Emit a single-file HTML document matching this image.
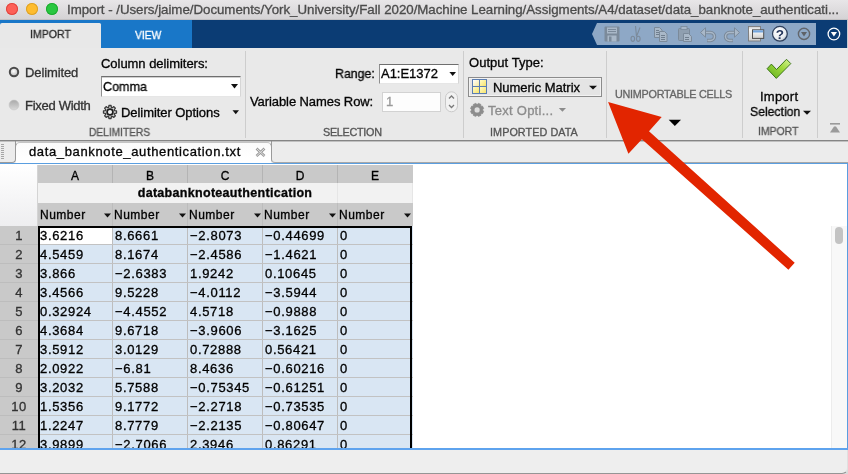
<!DOCTYPE html>
<html><head><meta charset="utf-8">
<style>
*{box-sizing:border-box;margin:0;padding:0}
html,body{width:848px;height:474px;overflow:hidden;background:#ececec;font-family:"Liberation Sans",sans-serif;position:relative}
.a{position:absolute}
.t{position:absolute;line-height:1;white-space:nowrap;font-family:"Liberation Sans",sans-serif;-webkit-text-stroke:0.32px currentColor;will-change:transform}
.tl{position:absolute;top:3px;width:12px;height:12px;border-radius:50%}
.sep{position:absolute;top:51px;width:1px;height:87px;background:#cdcdcd}
.gl{position:absolute;background:#bcbcbc}
</style></head><body>
<!-- title bar -->
<div class="a" style="left:0;top:0;width:848px;height:20px;background:linear-gradient(#e8e6e8,#d4d2d4)"></div>
<div class="a" style="left:0;top:19px;width:848px;height:1px;background:#c2c0c2"></div>
<div class="tl" style="left:6px;background:#fd5f57;box-shadow:inset 0 0 0 1px #e0443e"></div>
<div class="tl" style="left:26px;background:#febc2e;box-shadow:inset 0 0 0 1px #dca128"></div>
<div class="tl" style="left:46px;background:#29c740;box-shadow:inset 0 0 0 1px #1eaa30"></div>
<!-- tab bar -->
<div class="a" style="left:0;top:20px;width:848px;height:28px;background:#0b3c74"></div>
<div class="a" style="left:0;top:20px;width:192px;height:28px;background:#1977c8"></div>
<div class="a" style="left:0;top:23px;width:101px;height:26px;background:#e8e8e8;border-radius:2px 1.5px 0 0"></div>
<!-- QAT -->
<svg class="a" style="left:0;top:0" width="848" height="48">
  <polygon points="592,34 597,23 816,23 816,45 597,45" fill="#8ea8c6"/>
</svg>
<div class="a" style="left:847px;top:20px;width:1px;height:28px;background:#c9ccd2"></div>
<!-- ribbon -->
<div class="a" style="left:0;top:48px;width:848px;height:92px;background:#e9e9e9"></div>
<div class="sep" style="left:245px"></div>
<div class="sep" style="left:463px"></div>
<div class="sep" style="left:606px"></div>
<div class="sep" style="left:742px"></div>
<div class="sep" style="left:817px"></div>
<div class="a" style="left:0;top:140px;width:848px;height:1px;background:#8c8c8c"></div>
<!-- doc tab strip -->
<div class="a" style="left:0;top:141px;width:848px;height:22px;background:#f4f4f4"></div>
<div class="a" style="left:-1px;top:140px;width:17px;height:23px;background:#ececec;border-right:1px solid #9a9a9a;border-bottom:1px solid #9a9a9a;border-radius:0 0 4px 0"></div>
<div class="a" style="left:271px;top:140px;width:600px;height:23px;background:#ececec;border-left:1px solid #9a9a9a;border-bottom:1px solid #a8a8a8;border-radius:0 0 0 4px"></div>
<div class="a" style="left:15px;top:142px;width:257px;height:17px;background:linear-gradient(#fbfbfb,#ffffff);border:1px solid #9a9a9a;border-top-color:#c4c4c4;border-bottom:none;border-radius:5px 5px 0 0"></div>
<div class="a" style="left:16px;top:158px;width:255px;height:5px;background:#ffffff"></div>
<div class="a" style="left:0;top:140px;width:848px;height:1px;background:#858585"></div>
<div class="a" style="left:0;top:141px;width:848px;height:1px;background:rgba(140,140,140,0.45)"></div>
<!-- table panel -->
<div class="a" style="left:0;top:163px;width:848px;height:287px;background:#fff;border-top:1px solid #5a9ee0;border-right:1px solid #5a9ee0;border-bottom:2px solid #5ea3ee"></div>
<!-- table -->
<div class="a" style="left:0;top:164px;width:38px;height:62px;background:linear-gradient(#ffffff,#eeeef0)"></div>
<div class="a" style="left:37px;top:165px;width:1px;height:61px;background:#d4d4d4"></div>
<div class="a" style="left:38px;top:165px;width:375px;height:18px;background:#c9c9c9"></div>
<div class="a" style="left:38px;top:183px;width:375px;height:20px;background:#f2f2f2"></div>
<div class="a" style="left:337px;top:183px;width:1px;height:20px;background:#e6e6e6"></div>
<div class="a" style="left:412px;top:183px;width:1px;height:20px;background:#e6e6e6"></div>
<div class="a" style="left:38px;top:203px;width:375px;height:23px;background:#c9c9c9"></div>
<div class="a" style="left:0;top:226px;width:38px;height:222px;background:#c9c9c9"></div>
<div class="a" style="left:38px;top:226px;width:375px;height:222px;background:#d9e6f3"></div>
<div class="a" style="left:40px;top:228px;width:72px;height:17px;background:#ffffff"></div>
<div class="gl" style="left:112px;top:165px;width:1px;height:18px;background:#b4b4b4"></div>
<div class="gl" style="left:112px;top:203px;width:1px;height:245px;background:#bdbdbd"></div>
<div class="gl" style="left:187px;top:165px;width:1px;height:18px;background:#b4b4b4"></div>
<div class="gl" style="left:187px;top:203px;width:1px;height:245px;background:#bdbdbd"></div>
<div class="gl" style="left:262px;top:165px;width:1px;height:18px;background:#b4b4b4"></div>
<div class="gl" style="left:262px;top:203px;width:1px;height:245px;background:#bdbdbd"></div>
<div class="gl" style="left:337px;top:165px;width:1px;height:18px;background:#b4b4b4"></div>
<div class="gl" style="left:337px;top:203px;width:1px;height:245px;background:#bdbdbd"></div>
<div class="gl" style="left:38px;top:244px;width:375px;height:1px;background:#c2c2c2"></div>
<div class="gl" style="left:0;top:244px;width:38px;height:1px;background:#bdbdbd"></div>
<div class="gl" style="left:38px;top:263px;width:375px;height:1px;background:#c2c2c2"></div>
<div class="gl" style="left:0;top:263px;width:38px;height:1px;background:#bdbdbd"></div>
<div class="gl" style="left:38px;top:282px;width:375px;height:1px;background:#c2c2c2"></div>
<div class="gl" style="left:0;top:282px;width:38px;height:1px;background:#bdbdbd"></div>
<div class="gl" style="left:38px;top:301px;width:375px;height:1px;background:#c2c2c2"></div>
<div class="gl" style="left:0;top:301px;width:38px;height:1px;background:#bdbdbd"></div>
<div class="gl" style="left:38px;top:320px;width:375px;height:1px;background:#c2c2c2"></div>
<div class="gl" style="left:0;top:320px;width:38px;height:1px;background:#bdbdbd"></div>
<div class="gl" style="left:38px;top:339px;width:375px;height:1px;background:#c2c2c2"></div>
<div class="gl" style="left:0;top:339px;width:38px;height:1px;background:#bdbdbd"></div>
<div class="gl" style="left:38px;top:358px;width:375px;height:1px;background:#c2c2c2"></div>
<div class="gl" style="left:0;top:358px;width:38px;height:1px;background:#bdbdbd"></div>
<div class="gl" style="left:38px;top:377px;width:375px;height:1px;background:#c2c2c2"></div>
<div class="gl" style="left:0;top:377px;width:38px;height:1px;background:#bdbdbd"></div>
<div class="gl" style="left:38px;top:396px;width:375px;height:1px;background:#c2c2c2"></div>
<div class="gl" style="left:0;top:396px;width:38px;height:1px;background:#bdbdbd"></div>
<div class="gl" style="left:38px;top:415px;width:375px;height:1px;background:#c2c2c2"></div>
<div class="gl" style="left:0;top:415px;width:38px;height:1px;background:#bdbdbd"></div>
<div class="gl" style="left:38px;top:434px;width:375px;height:1px;background:#c2c2c2"></div>
<div class="gl" style="left:0;top:434px;width:38px;height:1px;background:#bdbdbd"></div>
<div class="a" style="left:38px;top:226px;width:374px;height:2px;background:#000"></div>
<div class="a" style="left:38px;top:226px;width:2px;height:222px;background:#000"></div>
<div class="a" style="left:410px;top:226px;width:2px;height:222px;background:#000"></div>
<div class="a" style="left:831px;top:226px;width:16px;height:222px;background:#f8f8f8;border-left:1px solid #ececec"></div>
<div class="a" style="left:835px;top:227px;width:8px;height:17px;background:#c3c3c3;border-radius:4px"></div>
<!-- status bar -->
<div class="a" style="left:0;top:450px;width:848px;height:24px;background:#d9d9d9"></div>
<div class="a" style="left:0;top:450px;width:848px;height:24px;background:#eeeeee;border-bottom:1px solid #959595;border-right:1px solid #e0e0e0;border-radius:0 0 6px 0"></div>
<div class="a" style="left:101px;top:76px;width:140px;height:21px;background:#fff;box-shadow:inset 0 1px 0 #d0d0d0;border-top:1px solid #6f6f6f;border-left:1px solid #8f8f8f;border-right:1px solid #d6d6d6;border-bottom:1px solid #e6e6e6"></div>
<div class="a" style="left:379px;top:64px;width:80px;height:20px;background:#fff;border-top:1px solid #6f6f6f;border-left:1px solid #8f8f8f;border-right:1px solid #d6d6d6;border-bottom:1px solid #e6e6e6"></div>
<div class="a" style="left:382px;top:92px;width:59px;height:20px;background:#fdfdfd;border:1px solid #d2d2d2"></div>
<div class="a" style="left:468px;top:77px;width:134px;height:20px;background:#e4e4e4;border:1px solid #8c8c8c;box-shadow:inset 0 0 0 1px #f2f2f2"></div>
<div class="t" style="left:67.00px;top:2.74px;font-size:13.3px;color:#4b4b4b;letter-spacing:-0.029px;">Import - /Users/jaime/Documents/York_University/Fall 2020/Machine Learning/Assigments/A4/dataset/data_banknote_authenticati...</div>
<div class="t" style="left:30.00px;top:29.29px;font-size:11px;color:#2b2b2b;transform-origin:0 0;transform:scaleX(0.9620);">IMPORT</div>
<div class="t" style="left:135.00px;top:30.17px;font-size:11.5px;color:#ffffff;transform-origin:0 0;transform:scaleX(0.8982);">VIEW</div>
<div class="t" style="left:24.70px;top:66.00px;font-size:13px;color:#333;letter-spacing:-0.111px;">Delimited</div>
<div class="t" style="left:24.70px;top:99.00px;font-size:13px;color:#333;letter-spacing:-0.284px;">Fixed Width</div>
<div class="t" style="left:101.40px;top:57.30px;font-size:13px;color:#050505;letter-spacing:-0.039px;">Column delimiters:</div>
<div class="t" style="left:103.20px;top:79.60px;font-size:13px;color:#050505;transform-origin:0 0;transform:scaleX(0.9660);">Comma</div>
<div class="t" style="left:120.60px;top:105.70px;font-size:13px;color:#050505;letter-spacing:-0.063px;">Delimiter Options</div>
<div class="t" style="left:89.40px;top:126.56px;font-size:10.8px;color:#555;transform-origin:0 0;transform:scaleX(0.9436);">DELIMITERS</div>
<div class="t" style="left:334.50px;top:66.80px;font-size:13px;color:#050505;transform-origin:0 0;transform:scaleX(0.9506);">Range:</div>
<div class="t" style="left:381.00px;top:66.80px;font-size:13px;color:#050505;letter-spacing:-0.016px;">A1:E1372</div>
<div class="t" style="left:250.20px;top:95.00px;font-size:13px;color:#050505;letter-spacing:-0.087px;">Variable Names Row:</div>
<div class="t" style="left:385.50px;top:95.00px;font-size:13px;color:#9a9a9a;">1</div>
<div class="t" style="left:322.60px;top:126.56px;font-size:10.8px;color:#555;letter-spacing:-0.275px;">SELECTION</div>
<div class="t" style="left:468.60px;top:56.00px;font-size:13px;color:#050505;letter-spacing:0.036px;">Output Type:</div>
<div class="t" style="left:492.70px;top:80.70px;font-size:13px;color:#050505;letter-spacing:-0.031px;">Numeric Matrix</div>
<div class="t" style="left:487.50px;top:104.00px;font-size:13px;color:#8c8c8c;letter-spacing:0.260px;">Text Opti...</div>
<div class="t" style="left:489.50px;top:126.66px;font-size:10.8px;color:#555;letter-spacing:0.068px;">IMPORTED DATA</div>
<div class="t" style="left:615.40px;top:88.86px;font-size:10.8px;color:#666;letter-spacing:-0.247px;">UNIMPORTABLE CELLS</div>
<div class="t" style="left:760.00px;top:90.00px;font-size:13px;color:#050505;letter-spacing:0.231px;">Import</div>
<div class="t" style="left:750.40px;top:104.70px;font-size:13px;color:#050505;transform-origin:0 0;transform:scaleX(0.9393);">Selection</div>
<div class="t" style="left:757.60px;top:126.46px;font-size:10.8px;color:#555;transform-origin:0 0;transform:scaleX(0.9658);">IMPORT</div>
<div class="t" style="left:28.70px;top:145.20px;font-size:13px;color:#050505;letter-spacing:0.637px;">data_banknote_authentication.txt</div>
<div class="t" style="left:75.25px;top:169.84px;font-size:12px;color:#000;transform:translateX(-50%);">A</div>
<div class="t" style="left:150.00px;top:169.84px;font-size:12px;color:#000;transform:translateX(-50%);">B</div>
<div class="t" style="left:225.00px;top:169.84px;font-size:12px;color:#000;transform:translateX(-50%);">C</div>
<div class="t" style="left:300.00px;top:169.84px;font-size:12px;color:#000;transform:translateX(-50%);">D</div>
<div class="t" style="left:375.00px;top:169.84px;font-size:12px;color:#000;transform:translateX(-50%);">E</div>
<div class="t" style="left:225.00px;top:187.32px;font-size:12.5px;color:#050505;font-weight:700;letter-spacing:0.305px;transform:translateX(-50%);">databanknoteauthentication</div>
<div class="t" style="left:39.50px;top:209.44px;font-size:12px;color:#000;letter-spacing:0.503px;">Number</div>
<div class="t" style="left:114.00px;top:209.44px;font-size:12px;color:#000;letter-spacing:0.503px;">Number</div>
<div class="t" style="left:189.00px;top:209.44px;font-size:12px;color:#000;letter-spacing:0.503px;">Number</div>
<div class="t" style="left:264.00px;top:209.44px;font-size:12px;color:#000;letter-spacing:0.503px;">Number</div>
<div class="t" style="left:339.00px;top:209.44px;font-size:12px;color:#000;letter-spacing:0.503px;">Number</div>
<div class="t" style="left:19.00px;top:228.70px;font-size:13px;color:#333;transform:translateX(-50%);letter-spacing:0.5px;">1</div>
<div class="t" style="left:40.20px;top:228.70px;font-size:13px;color:#000;letter-spacing:0.68px;">3.6216</div>
<div class="t" style="left:114.70px;top:228.70px;font-size:13px;color:#000;letter-spacing:0.68px;">8.6661</div>
<div class="t" style="left:189.70px;top:228.70px;font-size:13px;color:#000;letter-spacing:0.68px;">−2.8073</div>
<div class="t" style="left:264.70px;top:228.70px;font-size:13px;color:#000;letter-spacing:0.68px;">−0.44699</div>
<div class="t" style="left:339.70px;top:228.70px;font-size:13px;color:#000;letter-spacing:0.68px;">0</div>
<div class="t" style="left:19.00px;top:247.70px;font-size:13px;color:#333;transform:translateX(-50%);letter-spacing:0.5px;">2</div>
<div class="t" style="left:40.20px;top:247.70px;font-size:13px;color:#000;letter-spacing:0.68px;">4.5459</div>
<div class="t" style="left:114.70px;top:247.70px;font-size:13px;color:#000;letter-spacing:0.68px;">8.1674</div>
<div class="t" style="left:189.70px;top:247.70px;font-size:13px;color:#000;letter-spacing:0.68px;">−2.4586</div>
<div class="t" style="left:264.70px;top:247.70px;font-size:13px;color:#000;letter-spacing:0.68px;">−1.4621</div>
<div class="t" style="left:339.70px;top:247.70px;font-size:13px;color:#000;letter-spacing:0.68px;">0</div>
<div class="t" style="left:19.00px;top:266.70px;font-size:13px;color:#333;transform:translateX(-50%);letter-spacing:0.5px;">3</div>
<div class="t" style="left:40.20px;top:266.70px;font-size:13px;color:#000;letter-spacing:0.68px;">3.866</div>
<div class="t" style="left:114.70px;top:266.70px;font-size:13px;color:#000;letter-spacing:0.68px;">−2.6383</div>
<div class="t" style="left:189.70px;top:266.70px;font-size:13px;color:#000;letter-spacing:0.68px;">1.9242</div>
<div class="t" style="left:264.70px;top:266.70px;font-size:13px;color:#000;letter-spacing:0.68px;">0.10645</div>
<div class="t" style="left:339.70px;top:266.70px;font-size:13px;color:#000;letter-spacing:0.68px;">0</div>
<div class="t" style="left:19.00px;top:285.70px;font-size:13px;color:#333;transform:translateX(-50%);letter-spacing:0.5px;">4</div>
<div class="t" style="left:40.20px;top:285.70px;font-size:13px;color:#000;letter-spacing:0.68px;">3.4566</div>
<div class="t" style="left:114.70px;top:285.70px;font-size:13px;color:#000;letter-spacing:0.68px;">9.5228</div>
<div class="t" style="left:189.70px;top:285.70px;font-size:13px;color:#000;letter-spacing:0.68px;">−4.0112</div>
<div class="t" style="left:264.70px;top:285.70px;font-size:13px;color:#000;letter-spacing:0.68px;">−3.5944</div>
<div class="t" style="left:339.70px;top:285.70px;font-size:13px;color:#000;letter-spacing:0.68px;">0</div>
<div class="t" style="left:19.00px;top:304.70px;font-size:13px;color:#333;transform:translateX(-50%);letter-spacing:0.5px;">5</div>
<div class="t" style="left:40.20px;top:304.70px;font-size:13px;color:#000;letter-spacing:0.68px;">0.32924</div>
<div class="t" style="left:114.70px;top:304.70px;font-size:13px;color:#000;letter-spacing:0.68px;">−4.4552</div>
<div class="t" style="left:189.70px;top:304.70px;font-size:13px;color:#000;letter-spacing:0.68px;">4.5718</div>
<div class="t" style="left:264.70px;top:304.70px;font-size:13px;color:#000;letter-spacing:0.68px;">−0.9888</div>
<div class="t" style="left:339.70px;top:304.70px;font-size:13px;color:#000;letter-spacing:0.68px;">0</div>
<div class="t" style="left:19.00px;top:323.70px;font-size:13px;color:#333;transform:translateX(-50%);letter-spacing:0.5px;">6</div>
<div class="t" style="left:40.20px;top:323.70px;font-size:13px;color:#000;letter-spacing:0.68px;">4.3684</div>
<div class="t" style="left:114.70px;top:323.70px;font-size:13px;color:#000;letter-spacing:0.68px;">9.6718</div>
<div class="t" style="left:189.70px;top:323.70px;font-size:13px;color:#000;letter-spacing:0.68px;">−3.9606</div>
<div class="t" style="left:264.70px;top:323.70px;font-size:13px;color:#000;letter-spacing:0.68px;">−3.1625</div>
<div class="t" style="left:339.70px;top:323.70px;font-size:13px;color:#000;letter-spacing:0.68px;">0</div>
<div class="t" style="left:19.00px;top:342.70px;font-size:13px;color:#333;transform:translateX(-50%);letter-spacing:0.5px;">7</div>
<div class="t" style="left:40.20px;top:342.70px;font-size:13px;color:#000;letter-spacing:0.68px;">3.5912</div>
<div class="t" style="left:114.70px;top:342.70px;font-size:13px;color:#000;letter-spacing:0.68px;">3.0129</div>
<div class="t" style="left:189.70px;top:342.70px;font-size:13px;color:#000;letter-spacing:0.68px;">0.72888</div>
<div class="t" style="left:264.70px;top:342.70px;font-size:13px;color:#000;letter-spacing:0.68px;">0.56421</div>
<div class="t" style="left:339.70px;top:342.70px;font-size:13px;color:#000;letter-spacing:0.68px;">0</div>
<div class="t" style="left:19.00px;top:361.70px;font-size:13px;color:#333;transform:translateX(-50%);letter-spacing:0.5px;">8</div>
<div class="t" style="left:40.20px;top:361.70px;font-size:13px;color:#000;letter-spacing:0.68px;">2.0922</div>
<div class="t" style="left:114.70px;top:361.70px;font-size:13px;color:#000;letter-spacing:0.68px;">−6.81</div>
<div class="t" style="left:189.70px;top:361.70px;font-size:13px;color:#000;letter-spacing:0.68px;">8.4636</div>
<div class="t" style="left:264.70px;top:361.70px;font-size:13px;color:#000;letter-spacing:0.68px;">−0.60216</div>
<div class="t" style="left:339.70px;top:361.70px;font-size:13px;color:#000;letter-spacing:0.68px;">0</div>
<div class="t" style="left:19.00px;top:380.70px;font-size:13px;color:#333;transform:translateX(-50%);letter-spacing:0.5px;">9</div>
<div class="t" style="left:40.20px;top:380.70px;font-size:13px;color:#000;letter-spacing:0.68px;">3.2032</div>
<div class="t" style="left:114.70px;top:380.70px;font-size:13px;color:#000;letter-spacing:0.68px;">5.7588</div>
<div class="t" style="left:189.70px;top:380.70px;font-size:13px;color:#000;letter-spacing:0.68px;">−0.75345</div>
<div class="t" style="left:264.70px;top:380.70px;font-size:13px;color:#000;letter-spacing:0.68px;">−0.61251</div>
<div class="t" style="left:339.70px;top:380.70px;font-size:13px;color:#000;letter-spacing:0.68px;">0</div>
<div class="t" style="left:19.00px;top:399.70px;font-size:13px;color:#333;transform:translateX(-50%);letter-spacing:0.5px;">10</div>
<div class="t" style="left:40.20px;top:399.70px;font-size:13px;color:#000;letter-spacing:0.68px;">1.5356</div>
<div class="t" style="left:114.70px;top:399.70px;font-size:13px;color:#000;letter-spacing:0.68px;">9.1772</div>
<div class="t" style="left:189.70px;top:399.70px;font-size:13px;color:#000;letter-spacing:0.68px;">−2.2718</div>
<div class="t" style="left:264.70px;top:399.70px;font-size:13px;color:#000;letter-spacing:0.68px;">−0.73535</div>
<div class="t" style="left:339.70px;top:399.70px;font-size:13px;color:#000;letter-spacing:0.68px;">0</div>
<div class="t" style="left:19.00px;top:418.70px;font-size:13px;color:#333;transform:translateX(-50%);letter-spacing:0.5px;">11</div>
<div class="t" style="left:40.20px;top:418.70px;font-size:13px;color:#000;letter-spacing:0.68px;">1.2247</div>
<div class="t" style="left:114.70px;top:418.70px;font-size:13px;color:#000;letter-spacing:0.68px;">8.7779</div>
<div class="t" style="left:189.70px;top:418.70px;font-size:13px;color:#000;letter-spacing:0.68px;">−2.2135</div>
<div class="t" style="left:264.70px;top:418.70px;font-size:13px;color:#000;letter-spacing:0.68px;">−0.80647</div>
<div class="t" style="left:339.70px;top:418.70px;font-size:13px;color:#000;letter-spacing:0.68px;">0</div>
<div class="t" style="left:19.00px;top:437.70px;font-size:13px;color:#333;transform:translateX(-50%);letter-spacing:0.5px;">12</div>
<div class="t" style="left:40.20px;top:437.70px;font-size:13px;color:#000;letter-spacing:0.68px;">3.9899</div>
<div class="t" style="left:114.70px;top:437.70px;font-size:13px;color:#000;letter-spacing:0.68px;">−2.7066</div>
<div class="t" style="left:189.70px;top:437.70px;font-size:13px;color:#000;letter-spacing:0.68px;">2.3946</div>
<div class="t" style="left:264.70px;top:437.70px;font-size:13px;color:#000;letter-spacing:0.68px;">0.86291</div>
<div class="t" style="left:339.70px;top:437.70px;font-size:13px;color:#000;letter-spacing:0.68px;">0</div>
<svg class="a" style="left:0;top:0" width="848" height="474">
<defs>
 <radialGradient id="rad1" cx="0.45" cy="0.4" r="0.6"><stop offset="0" stop-color="#ffffff"/><stop offset="1" stop-color="#b9b9b9"/></radialGradient>
 <linearGradient id="rad2" x1="0" y1="0" x2="0" y2="1"><stop offset="0" stop-color="#a9a9a9"/><stop offset="1" stop-color="#d9d9d9"/></linearGradient>
 <linearGradient id="chk" x1="0" y1="1" x2="1" y2="0"><stop offset="0" stop-color="#5fae1e"/><stop offset="0.6" stop-color="#9fd93c"/><stop offset="1" stop-color="#d8f59a"/></linearGradient>
 <linearGradient id="yel" x1="0" y1="0" x2="1" y2="1"><stop offset="0" stop-color="#fffcc8"/><stop offset="1" stop-color="#f7e36a"/></linearGradient>
 <linearGradient id="yelw" x1="0" y1="0" x2="1" y2="1"><stop offset="0" stop-color="#ffffff"/><stop offset="1" stop-color="#f6eba0"/></linearGradient>
 <radialGradient id="help" cx="0.4" cy="0.35" r="0.7"><stop offset="0" stop-color="#ffffff"/><stop offset="0.7" stop-color="#e8ecf0"/><stop offset="1" stop-color="#aab4c0"/></radialGradient>
 <linearGradient id="win" x1="0" y1="0" x2="0" y2="1"><stop offset="0" stop-color="#ffffff"/><stop offset="1" stop-color="#cfcfcf"/></linearGradient>
</defs>
<!-- radios -->
<circle cx="14" cy="72" r="4.2" fill="url(#rad1)" stroke="#4a4a4a" stroke-width="2"/>
<circle cx="14" cy="105" r="4.9" fill="url(#rad2)" stroke="#c4c4c4" stroke-width="0.6"/>
<!-- combo arrows -->
<polygon points="231,84 238,84 234.5,88.5" fill="#111"/>
<polygon points="232.5,110.3 239,110.3 235.75,114.3" fill="#111"/>
<polygon points="449.4,72 456,72 452.7,76" fill="#111"/>
<polygon points="589,85.7 597,85.7 593,89.5" fill="#111"/>
<polygon points="558.8,108 566,108 562.4,111.8" fill="#8c8c8c"/>
<polygon points="668.7,119.7 681,119.7 674.85,126" fill="#000"/>
<polygon points="803,110.7 811,110.7 807,114.7" fill="#111"/>
<!-- gears -->
<path d="M114.71,110.63 L116.51,110.92 L116.51,113.08 L114.71,113.37 L114.29,114.36 L115.37,115.84 L113.84,117.37 L112.36,116.29 L111.37,116.71 L111.08,118.51 L108.92,118.51 L108.63,116.71 L107.64,116.29 L106.16,117.37 L104.63,115.84 L105.71,114.36 L105.29,113.37 L103.49,113.08 L103.49,110.92 L105.29,110.63 L105.71,109.64 L104.63,108.16 L106.16,106.63 L107.64,107.71 L108.63,107.29 L108.92,105.49 L111.08,105.49 L111.37,107.29 L112.36,107.71 L113.84,106.63 L115.37,108.16 L114.29,109.64 Z" fill="#d6d6d6" stroke="#3a3a3a" stroke-width="1.3" stroke-linejoin="round"/>
<circle cx="110" cy="112" r="2.9" fill="#f4f4f4" stroke="#1e1e1e" stroke-width="1.7"/>
<path d="M482.69,110.23 L483.57,111.19 L482.59,113.57 L481.29,113.62 L480.82,114.09 L480.77,115.39 L478.39,116.37 L477.43,115.49 L476.77,115.49 L475.81,116.37 L473.43,115.39 L473.38,114.09 L472.91,113.62 L471.61,113.57 L470.63,111.19 L471.51,110.23 L471.51,109.57 L470.63,108.61 L471.61,106.23 L472.91,106.18 L473.38,105.71 L473.43,104.41 L475.81,103.43 L476.77,104.31 L477.43,104.31 L478.39,103.43 L480.77,104.41 L480.82,105.71 L481.29,106.18 L482.59,106.23 L483.57,108.61 L482.69,109.57 Z" fill="#8c8c8c" stroke="#8c8c8c" stroke-width="0.9" stroke-linejoin="round"/>
<circle cx="477.1" cy="109.9" r="2.6" fill="#dedede"/>
<!-- spinner -->
<rect x="445.5" y="91.8" width="12" height="20" rx="6" fill="#f2f2f2" stroke="#c8c8c8" stroke-width="1"/>
<polyline points="449,98.5 451.5,96 454,98.5" fill="none" stroke="#7a7a7a" stroke-width="1.3"/>
<polyline points="449,105 451.5,107.5 454,105" fill="none" stroke="#7a7a7a" stroke-width="1.3"/>
<!-- grid icon -->
<rect x="472" y="79" width="15" height="15" fill="#5a7db2"/>
<rect x="473" y="80" width="6" height="6" fill="url(#yelw)"/>
<rect x="480" y="80" width="6" height="6" fill="url(#yel)"/>
<rect x="473" y="87" width="6" height="6" fill="url(#yel)"/>
<rect x="480" y="87" width="6" height="6" fill="url(#yel)"/>
<!-- checkmark -->
<polygon points="767.1,68.7 771.4,64.1 776.5,69.5 786.5,59.3 790.8,63.6 776.3,78.4" fill="url(#chk)" stroke="#2f6a0c" stroke-width="0.9" stroke-linejoin="miter"/>
<!-- collapse icon -->
<rect x="830" y="123" width="10" height="1.6" fill="#9a9a9a"/>
<polygon points="830,132.6 840,132.6 836,126.6 834,126.6" fill="#9a9a9a"/>
<!-- doc tab close -->
<path d="M256.5,148.5 L264.5,156 M264.5,148.5 L256.5,156" stroke="#999" stroke-width="2.6"/>
<path d="M256.5,148.5 L264.5,156 M264.5,148.5 L256.5,156" stroke="#e4e4e4" stroke-width="1"/>
<!-- gripper -->
<g fill="#a5a5a5">
<rect x="1" y="144" width="3" height="1"/><rect x="1" y="146" width="3" height="1"/><rect x="1" y="148" width="3" height="1"/><rect x="1" y="150" width="3" height="1"/>
<rect x="1" y="152" width="3" height="1"/><rect x="1" y="154" width="3" height="1"/><rect x="1" y="156" width="3" height="1"/><rect x="1" y="158" width="3" height="1"/>
</g>
<!-- QAT icons -->
<g>
 <rect x="604.5" y="26.5" width="15" height="15" rx="1" fill="#7b8a9a"/>
 <rect x="607" y="27.5" width="10" height="6" fill="#a9b8c8"/>
 <rect x="608" y="29" width="8" height="1" fill="#7b8a9a"/><rect x="608" y="31" width="8" height="1" fill="#7b8a9a"/>
 <rect x="607.5" y="35.5" width="9" height="6" fill="#a9b8c8"/>
 <rect x="609" y="36.5" width="2.5" height="5" fill="#7b8a9a"/>
</g>
<g fill="none" stroke="#7b8a9a" stroke-width="1.1">
 <path d="M635.5,26 L636.5,36.5 M640,27.5 L636.5,36.5"/>
 <ellipse cx="632.8" cy="38.8" rx="1.8" ry="2.6"/>
 <ellipse cx="638.3" cy="38.8" rx="1.8" ry="2.6"/>
</g>
<g>
 <path d="M654.5,27.5 h5 l2.5,2.5 v7.5 h-7.5 z" fill="#a9b8c8" stroke="#7b8a9a" stroke-width="1"/>
 <path d="M659.5,31.5 h5 l2.5,2.5 v7.5 h-7.5 z" fill="#a9b8c8" stroke="#7b8a9a" stroke-width="1"/>
 <path d="M656,30.5 h3 M656,32.5 h3 M656,34.5 h3 M661,35.5 h4 M661,37.5 h4 M661,39.5 h4" stroke="#6f7e8e" stroke-width="1"/>
</g>
<g>
 <rect x="678.5" y="28.5" width="11" height="12" rx="1" fill="#8f9fb0" stroke="#7b8a9a" stroke-width="1"/>
 <rect x="681" y="26.5" width="6" height="3" fill="#a9b8c8" stroke="#7b8a9a" stroke-width="0.8"/>
 <path d="M683.5,33.5 h5 l3,3 v5 h-8 z" fill="#a9b8c8" stroke="#7b8a9a" stroke-width="1"/>
 <path d="M685,37.5 h4 M685,39.5 h4" stroke="#6f7e8e" stroke-width="1"/>
</g>
<g fill="none" stroke="#7b8a9a" stroke-width="3.4">
 <path d="M704,32.5 H710.5 A4,4 0 0 1 710.5,40.5 H707"/>
 <path d="M735.5,32.5 H729.5 A4,4 0 0 0 729.5,40.5 H733"/>
</g>
<g fill="none" stroke="#a9b8c8" stroke-width="1.4">
 <path d="M704,32.5 H710.5 A4,4 0 0 1 710.5,40.5 H707.5"/>
 <path d="M735.5,32.5 H729.5 A4,4 0 0 0 729.5,40.5 H732.5"/>
</g>
<polygon points="700.5,32.5 705.5,27.8 705.5,37.2" fill="#a9b8c8" stroke="#7b8a9a" stroke-width="1"/>
<polygon points="739.5,32.5 734.5,27.8 734.5,37.2" fill="#a9b8c8" stroke="#7b8a9a" stroke-width="1"/>
<!-- windows icon -->
<rect x="748.5" y="26.5" width="12" height="14.5" fill="url(#win)" stroke="#7a7a7a" stroke-width="0.9"/>
<rect x="749" y="27" width="11" height="1.6" fill="#d8d8d8"/>
<rect x="752.5" y="29.8" width="11.2" height="8.6" fill="url(#win)" stroke="#4e4e4e" stroke-width="1"/>
<rect x="753" y="30.3" width="10.2" height="2.2" fill="#74a6de"/>
<!-- help -->
<circle cx="779.9" cy="33.8" r="7.4" fill="url(#help)" stroke="#2d3f5c" stroke-width="1.2"/>
<text x="779.9" y="38.9" text-anchor="middle" font-family="Liberation Sans" font-weight="700" font-size="13.5" fill="#22345a">?</text>
<!-- gray circle down -->
<circle cx="804" cy="33.9" r="5.6" fill="none" stroke="#62666c" stroke-width="1.4"/>
<polygon points="801,32 807,32 804,36.4" fill="#5e6268"/>
<!-- white circle down -->
<circle cx="833.9" cy="34" r="5.8" fill="none" stroke="#ffffff" stroke-width="1.3"/>
<polygon points="830.8,32 837,32 833.9,36.4" fill="#ffffff"/>
<!-- number arrows -->
<polygon points="104.0,213.6 111.0,213.6 107.5,217.4" fill="#111"/>
<polygon points="179.0,213.6 186.0,213.6 182.5,217.4" fill="#111"/>
<polygon points="254.0,213.6 261.0,213.6 257.5,217.4" fill="#111"/>
<polygon points="329.0,213.6 336.0,213.6 332.5,217.4" fill="#111"/>
<polygon points="404.0,213.6 411.0,213.6 407.5,217.4" fill="#111"/>
<rect x="0" y="448" width="848" height="2" fill="#5ea3ee"/>
<!-- red arrow -->
<polygon points="608.1,102.1 661.7,117 649,131.3 794.7,262.8 788.4,269.7 641.9,139.3 628.4,153.8" fill="#e22500"/>
</svg>
</body></html>
